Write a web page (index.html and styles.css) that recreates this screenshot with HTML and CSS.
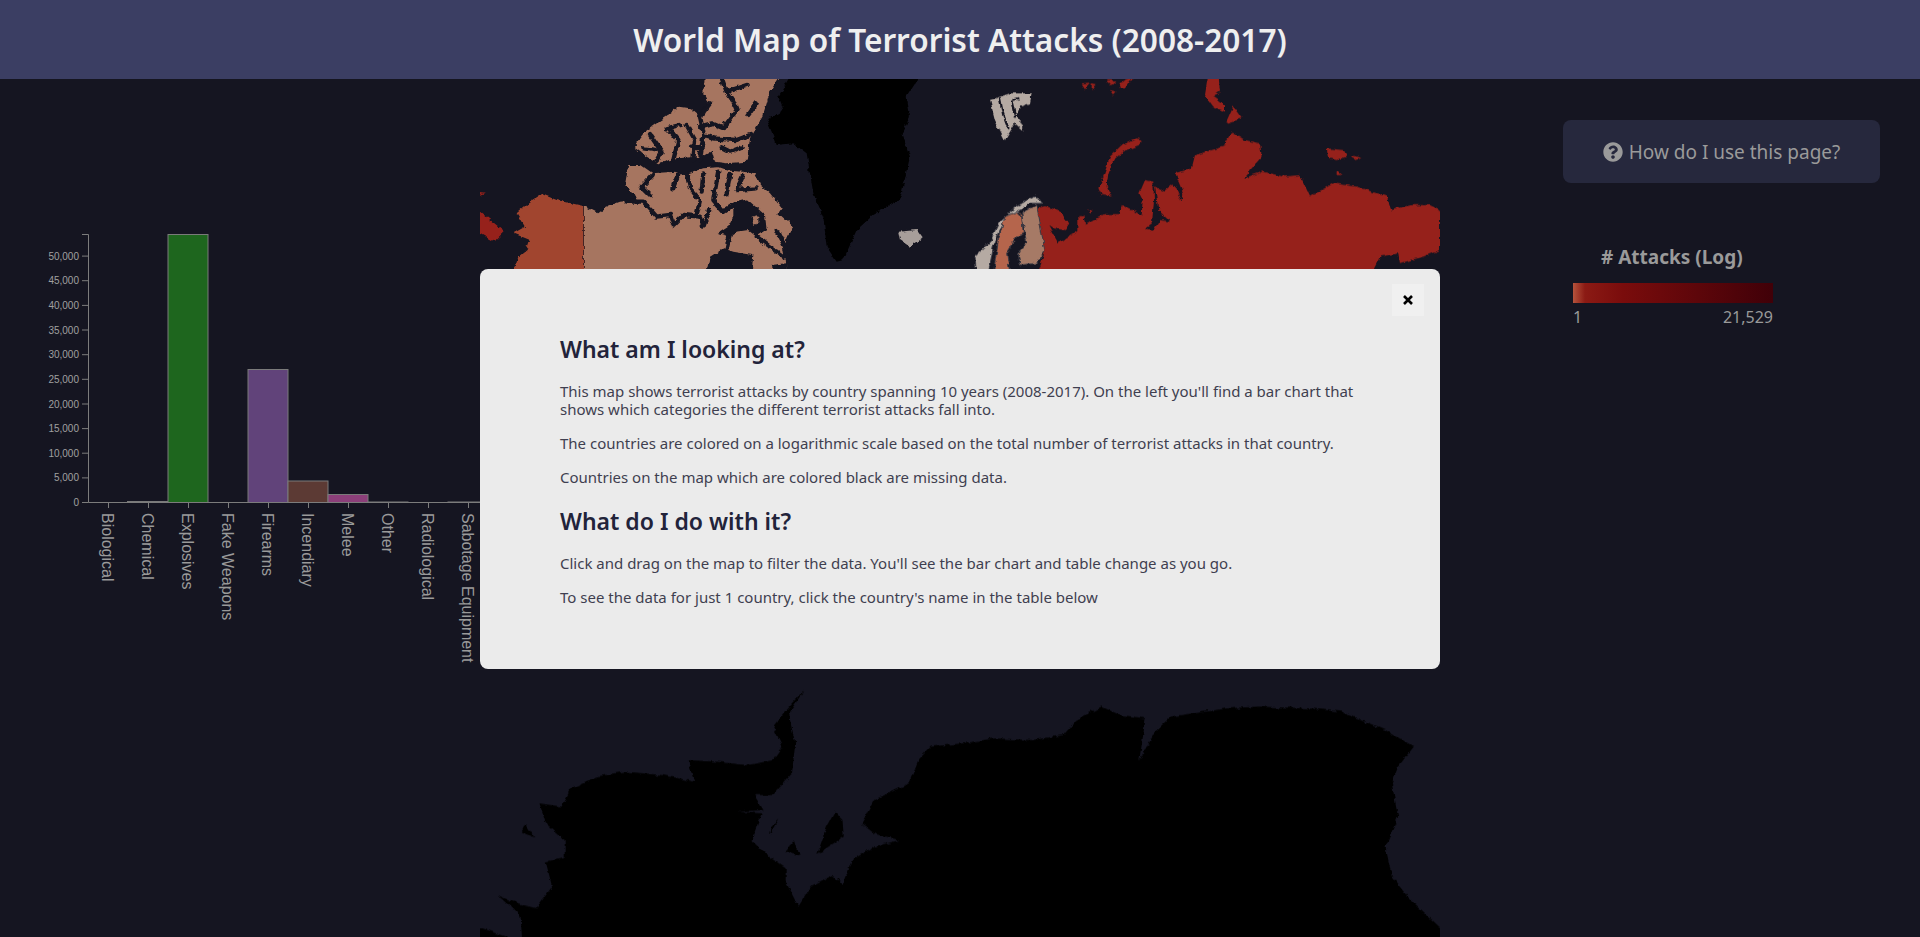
FILE: index.html
```html
<!DOCTYPE html>
<html lang="en">
<head>
<meta charset="utf-8">
<title>World Map of Terrorist Attacks (2008-2017)</title>
<link rel="stylesheet" href="styles.css">
</head>
<body>
<header class="topbar"><h1>World Map of Terrorist Attacks (2008-2017)</h1></header>
<main class="layout">
  <section class="chart-col">
    <svg class="chart" viewBox="0 199 480 480" width="480" height="480">
      <g class="bars">
        <rect class="bar" x="127.5" y="501.5" width="40" height="1" />
        <rect class="bar b-green" x="168" y="234.5" width="40" height="268"/>
        <rect class="bar b-purple" x="248" y="369.5" width="40" height="133"/>
        <rect class="bar b-brown" x="288" y="481" width="40" height="21.5"/>
        <rect class="bar b-pink" x="328" y="494.5" width="40" height="8"/>
        <rect class="bar" x="368" y="502" width="40" height="0.5"/>
        <rect class="bar" x="448" y="502" width="40" height="0.5"/>
      </g>
      <g class="axis">
        <path d="M82 234.5H88.5V502.5H82"/>
        <path d="M82 477.9H88.5M82 453.2H88.5M82 428.6H88.5M82 404H88.5M82 379.3H88.5M82 354.7H88.5M82 330H88.5M82 305.4H88.5M82 280.7H88.5M82 256.1H88.5"/>
        <path d="M88.5 502.5H480M108.5 502.5V508M148.5 502.5V508M188.5 502.5V508M228.5 502.5V508M268.5 502.5V508M308.5 502.5V508M348.5 502.5V508M388.5 502.5V508M428.5 502.5V508M468.5 502.5V508"/>
      </g>
      <g class="ylab">
        <text x="79" y="506">0</text><text x="79" y="481.4">5,000</text><text x="79" y="456.7">10,000</text><text x="79" y="432.1">15,000</text><text x="79" y="407.5">20,000</text><text x="79" y="382.8">25,000</text><text x="79" y="358.2">30,000</text><text x="79" y="333.5">35,000</text><text x="79" y="308.9">40,000</text><text x="79" y="284.2">45,000</text><text x="79" y="259.6">50,000</text>
      </g>
      <g class="xlab">
        <text transform="translate(102 513) rotate(90)">Biological</text>
        <text transform="translate(142 513) rotate(90)">Chemical</text>
        <text transform="translate(182 513) rotate(90)">Explosives</text>
        <text transform="translate(222 513) rotate(90)">Fake Weapons</text>
        <text transform="translate(262 513) rotate(90)">Firearms</text>
        <text transform="translate(302 513) rotate(90)">Incendiary</text>
        <text transform="translate(342 513) rotate(90)">Melee</text>
        <text transform="translate(382 513) rotate(90)">Other</text>
        <text transform="translate(422 513) rotate(90)">Radiological</text>
        <text transform="translate(462 513) rotate(90)">Sabotage Equipment</text>
      </g>
    </svg>
  </section>

  <section class="map-col">
    <svg class="map" viewBox="480 79 960 858" width="960" height="858">
      <defs>
        <filter id="coast" x="440" y="40" width="1040" height="940" filterUnits="userSpaceOnUse" color-interpolation-filters="sRGB">
          <feTurbulence type="fractalNoise" baseFrequency="0.16" numOctaves="3" seed="7"/>
          <feDisplacementMap in="SourceGraphic" scale="5" xChannelSelector="R" yChannelSelector="G"/>
        </filter>
      </defs>
      <g filter="url(#coast)">
        <g transform="translate(470 60) scale(.33333)">
          <path class="black" d="M965 40L1355 40L1310 110L1320 170L1295 220L1320 290L1290 420L1210 465L1160 510L1120 600L1100 605L1070 560L1060 470L1030 400L1010 280L970 250L920 255L905 215L890 180L940 150L925 110Z"/>
          <path class="ice" d="M1285 515L1340 510L1358 535L1320 560L1290 540Z"/>
          <path class="red" d="M0 455L30 455L105 515L75 545L30 520L0 520ZM0 393L48 398L30 406L0 406Z"/>
          <path class="usa" d="M340 438L340 640L130 640L145 590L170 570L180 540L130 520L165 500L140 460L180 425L215 402L260 420Z"/>
          <path class="can" d="M705 40L935 40L900 95L880 165L860 200L840 235L830 305L770 310L735 305L725 270L690 290L620 295L565 310L530 290L490 260L525 215L560 190L590 170L630 140L660 145L690 170L715 130L700 100Z"/>
          <path class="can" d="M475 315L510 315L545 340L615 335L640 345L700 325L745 322L775 332L820 335L855 340L870 375L900 400L935 445L925 460L970 500L950 530L945 560L950 640L342 640L342 438L385 460L410 440L450 425L500 420L490 400L465 375Z"/>
          <path class="sea" d="M750 40L770 95L830 75M770 95L790 125L800 150L760 205L725 190L690 200M860 130L835 165M735 235L700 225L690 300M725 235L800 240L840 225M755 262L780 275L815 262M600 210L625 240L610 300M540 225L575 275L560 300M650 195L675 240L670 300M590 205L630 195M520 265L555 270M660 260L690 265M720 130L690 170L700 215"/>
          <path class="sea" d="M548 345L515 380L540 405M470 425L520 425L560 470L600 465L610 495L640 465L690 470L700 500L718 450M625 345L610 385M650 340L660 385L690 420L680 465M700 340L695 395M745 335L730 420L760 455L790 435L830 425M780 345L770 400M820 345L800 390L860 385M780 520L770 565M920 510L945 560L950 590M860 530L940 590"/>
          <path class="seafill" d="M708 640L720 590L760 565L790 575L850 585L845 640ZM790 430L840 425L885 465L890 510L860 530L835 510L800 515L780 530L745 520L775 500L790 470ZM915 640L905 615L950 610L950 640Z"/>
          <path class="can" d="M845 470L865 465L865 490L850 495Z"/>
        </g>
        <g transform="translate(950 60) scale(.33333)">
          <path class="red" d="M262 640L285 575L262 480L265 445L285 438L330 455L358 490L345 510L310 505L295 495L325 550L385 510L385 465L400 465L405 495L465 462L510 462L515 435L575 465L578 420L568 400L585 360L610 365L612 420L606 490L585 505L610 510L630 480L660 485L625 450L615 380L640 395L670 370L695 425L700 400L675 340L725 325L735 285L820 260L845 215L885 240L930 250L935 290L880 355L940 335L1000 350L1050 345L1080 410L1150 370L1220 380L1310 410L1325 450L1380 435L1440 435L1470 450L1470 570L1420 590L1350 610L1345 580L1290 590L1265 640Z"/>
          <path class="red" d="M575 240L570 255L520 275L490 300L475 340L470 380L485 410L455 405L445 385L460 350L480 290L510 260L560 235Z"/>
          <path class="red" d="M775 40L805 40L810 95L790 110L825 135L825 155L790 140L765 105ZM850 140L875 175L828 190ZM395 70L420 68L405 85ZM425 70L440 72L425 95ZM470 60L500 62L485 75ZM505 70L550 50L525 85L510 85ZM480 90L500 95L490 105ZM1130 265L1180 270L1190 290L1160 300L1135 295ZM1205 285L1235 295L1215 300ZM1160 330L1178 345L1160 345ZM415 445L428 450L420 458Z"/>
          <path class="ice2" d="M120 120L180 100L245 100L240 130L210 140L200 165L222 215L195 190L165 240L135 180Z"/>
          <path class="sea thin" d="M150 115L160 165L175 205M185 125L195 170M205 115L190 120"/>
          <path class="ice2 line" d="M80 640L75 590L120 545L145 490L200 440L255 405L275 430L240 430L215 450L180 465L150 510L130 560L115 640Z"/>
          <path class="swe line" d="M130 640L145 540L165 470L200 455L215 470L220 520L200 530L170 580L180 640Z"/>
          <path class="fin line" d="M215 460L260 435L270 490L285 575L260 610L210 615L205 580L230 545L225 520Z"/>
        </g>
        <g transform="translate(470 660) scale(.63138 .33333)">
          <path class="black" d="M85 900L80 770L60 730L45 705L75 730L105 745L130 680L120 605L150 590L150 540L120 490L110 430L145 440L160 385L200 350L245 335L305 345L355 365L345 300L390 305L440 315L480 300L495 260L480 200L500 150L530 88L505 160L515 250L510 340L480 405L450 405L465 450L425 455L440 530L470 585L500 625L500 665L520 740L540 680L575 645L590 675L605 600L640 560L680 540L640 520L620 490L640 420L695 370L710 300L730 260L780 250L830 235L890 240L940 225L960 180L1000 140L1030 165L1070 175L1060 305L1085 215L1110 170L1200 145L1250 140L1330 145L1380 155L1450 210L1495 260L1470 320L1460 370L1470 470L1450 560L1460 650L1485 710L1535 800L1600 900Z"/>
          <path class="black" d="M578 455L590 480L592 530L550 582L565 500ZM88 490L102 532L82 515ZM490 475L475 525L478 500ZM515 540L522 585L500 575ZM425 455L462 460L445 545L430 520ZM0 805L20 805L60 831L40 900L0 900Z"/>
        </g>
      </g>
    </svg>
    <div class="modal">
      <button class="close" aria-label="Close"><svg viewBox="0 0 12 12" width="12" height="12"><path d="M2 2L10 10M10 2L2 10"/></svg></button>
      <h2>What am I looking at?</h2>
      <p>This map shows terrorist attacks by country spanning 10 years (2008-2017). On the left you'll find a bar chart that shows which categories the different terrorist attacks fall into.</p>
      <p>The countries are colored on a logarithmic scale based on the total number of terrorist attacks in that country.</p>
      <p>Countries on the map which are colored black are missing data.</p>
      <h2 class="next">What do I do with it?</h2>
      <p>Click and drag on the map to filter the data. You'll see the bar chart and table change as you go.</p>
      <p>To see the data for just 1 country, click the country's name in the table below</p>
    </div>
  </section>

  <aside class="side-col">
    <button class="help">
      <svg viewBox="0 0 512 512" width="20" height="20"><path d="M504 256c0 136.997-111.043 248-248 248S8 392.997 8 256C8 119.083 119.043 8 256 8s248 111.083 248 248zM262.655 90c-54.497 0-89.255 22.957-116.549 63.758-3.536 5.286-2.353 12.415 2.715 16.258l34.699 26.31c5.205 3.947 12.621 3.008 16.665-2.122 17.864-22.658 30.113-35.797 57.303-35.797 20.429 0 45.698 13.148 45.698 32.958 0 14.976-12.363 22.667-32.534 33.976C247.128 238.528 216 254.941 216 296v4c0 6.627 5.373 12 12 12h56c6.627 0 12-5.373 12-12v-1.333c0-28.462 83.186-29.647 83.186-106.667 0-58.002-60.165-102-116.531-102zM256 338c-25.365 0-46 20.635-46 46 0 25.364 20.635 46 46 46s46-20.636 46-46c0-25.365-20.635-46-46-46z"/></svg>
      <span>How do I use this page?</span>
    </button>
    <div class="legend">
      <h3># Attacks (Log)</h3>
      <div class="ramp"></div>
      <div class="ends"><span>1</span><span>21,529</span></div>
    </div>
  </aside>
</main>
</body>
</html>
```
FILE: styles.css
```css
* { box-sizing: border-box; }
html, body { margin: 0; height: 100%; overflow: hidden; }
body {
  background: #151521;
  font-family: "Noto Sans", "Open Sans", sans-serif;
  color: #9a9a9a;
  display: flex;
  flex-direction: column;
}
.topbar {
  height: 79px;
  flex: none;
  background: #3b3e63;
  display: flex;
  align-items: center;
  justify-content: center;
}
.topbar h1 {
  margin: 0;
  font-size: 31.6px;
  font-weight: 600;
  color: #efefef;
}
.layout {
  flex: 1;
  display: grid;
  grid-template-columns: 480px 960px 480px;
  min-height: 0;
}
.chart-col { padding-top: 120px; }
.chart { display: block; }
.bar { fill: none; stroke: #7a7a7a; stroke-width: 1; }
.b-green { fill: #1e661e; }
.b-purple { fill: #61437a; }
.b-brown { fill: #5c3a34; }
.b-pink { fill: #8c3f7a; }
.axis path { fill: none; stroke: #7c7c7c; stroke-width: 1; }
.ylab text { font: 10px "Liberation Sans", sans-serif; fill: #a0a0a0; text-anchor: end; }
.xlab text { font: 16px "Liberation Sans", sans-serif; fill: #9a9a9a; }

.map-col { position: relative; }
.map { display: block; }
.black { fill: #000; }
.ice { fill: #a79e9a; }
.ice2 { fill: #b5aaa3; }
.red { fill: #96211b; }
.usa { fill: #a1452f; }
.can { fill: #a67560; }
.swe { fill: #b5654c; }
.fin { fill: #a67a66; }
.line { stroke: #3a3a44; stroke-width: 3; }
.sea { fill: none; stroke: #151521; stroke-width: 13; stroke-linejoin: round; stroke-linecap: round; }
.sea.thin { stroke-width: 7; }
.seafill { fill: #151521; }

.modal {
  position: absolute;
  left: 0;
  top: 190px;
  width: 960px;
  height: 400px;
  background: #ebebeb;
  border-radius: 8px;
  padding: 64px 80px;
  color: #3f3f50;
  font-size: 15px;
  line-height: 18px;
}
.modal h2 {
  margin: 0 0 17px;
  font-size: 23px;
  line-height: 32px;
  font-weight: 600;
  color: #22233a;
}
.modal h2.next { margin-top: 19px; }
.modal p { margin: 0 0 16px; }
.close {
  position: absolute;
  top: 15px;
  right: 16px;
  width: 32px;
  height: 32px;
  border: 0;
  padding: 0;
  background: #f0f0f0;
  display: flex;
  align-items: center;
  justify-content: center;
}
.close path { stroke: #000; stroke-width: 2.6; fill: none; }

.side-col { padding: 41px 40px 0 123px; }
.help {
  width: 317px;
  height: 63px;
  background: #26283d;
  border: 0;
  border-radius: 8px;
  color: #9a9a9a;
  font: inherit;
  font-size: 19px;
  display: flex;
  align-items: center;
  justify-content: center;
  gap: 6px;
}
.help svg { fill: #9a9a9a; }
.legend { margin: 62px 0 0 10px; width: 200px; }
.legend h3 { margin: 0 0 14px 28px; font-size: 19px; line-height: 24px; font-weight: 700; color: #9a9a9a; }
.ramp { height: 20px; background: linear-gradient(90deg, #b5533c 0, #8b1a14 6%, #7a0c0c 25%, #400008 100%); }
.ends { display: flex; justify-content: space-between; font-size: 16px; line-height: 20px; margin-top: 4px; }
```
